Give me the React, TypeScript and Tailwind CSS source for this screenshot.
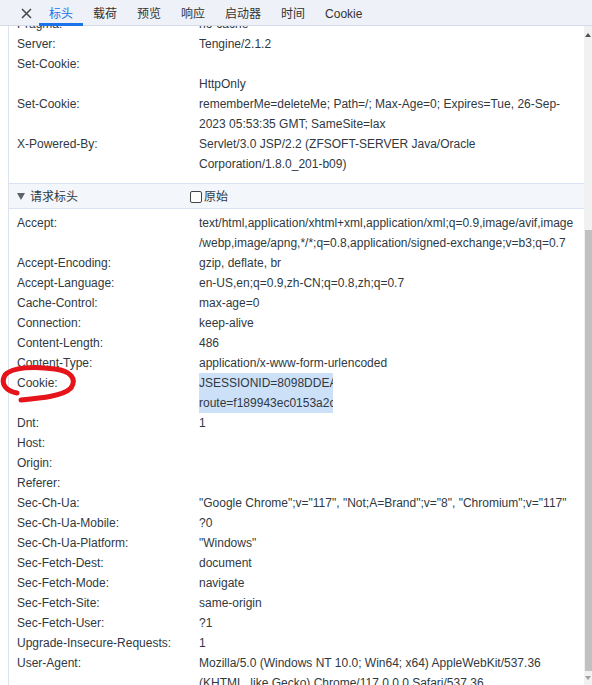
import React from 'react';

type Row = { name: string; value: string[]; selected?: boolean };

const responseRows: Row[] = [
  { name: 'Pragma:', value: ['no-cache'] },
  { name: 'Server:', value: ['Tengine/2.1.2'] },
  { name: 'Set-Cookie:', value: ['', 'HttpOnly'] },
  {
    name: 'Set-Cookie:',
    value: ['rememberMe=deleteMe; Path=/; Max-Age=0; Expires=Tue, 26-Sep-', '2023 05:53:35 GMT; SameSite=lax'],
  },
  { name: 'X-Powered-By:', value: ['Servlet/3.0 JSP/2.2 (ZFSOFT-SERVER Java/Oracle', 'Corporation/1.8.0_201-b09)'] },
];

const requestRows: Row[] = [
  {
    name: 'Accept:',
    value: [
      'text/html,application/xhtml+xml,application/xml;q=0.9,image/avif,image',
      '/webp,image/apng,*/*;q=0.8,application/signed-exchange;v=b3;q=0.7',
    ],
  },
  { name: 'Accept-Encoding:', value: ['gzip, deflate, br'] },
  { name: 'Accept-Language:', value: ['en-US,en;q=0.9,zh-CN;q=0.8,zh;q=0.7'] },
  { name: 'Cache-Control:', value: ['max-age=0'] },
  { name: 'Connection:', value: ['keep-alive'] },
  { name: 'Content-Length:', value: ['486'] },
  { name: 'Content-Type:', value: ['application/x-www-form-urlencoded'] },
  { name: 'Cookie:', value: ['JSESSIONID=8098DDEA07C1', 'route=f189943ec0153a2c7'], selected: true },
  { name: 'Dnt:', value: ['1'] },
  { name: 'Host:', value: [''] },
  { name: 'Origin:', value: [''] },
  { name: 'Referer:', value: [''] },
  { name: 'Sec-Ch-Ua:', value: ['"Google Chrome";v="117", "Not;A=Brand";v="8", "Chromium";v="117"'] },
  { name: 'Sec-Ch-Ua-Mobile:', value: ['?0'] },
  { name: 'Sec-Ch-Ua-Platform:', value: ['"Windows"'] },
  { name: 'Sec-Fetch-Dest:', value: ['document'] },
  { name: 'Sec-Fetch-Mode:', value: ['navigate'] },
  { name: 'Sec-Fetch-Site:', value: ['same-origin'] },
  { name: 'Sec-Fetch-User:', value: ['?1'] },
  { name: 'Upgrade-Insecure-Requests:', value: ['1'] },
  {
    name: 'User-Agent:',
    value: ['Mozilla/5.0 (Windows NT 10.0; Win64; x64) AppleWebKit/537.36', '(KHTML, like Gecko) Chrome/117.0.0.0 Safari/537.36'],
  },
];

const tabs = ['标头', '载荷', '预览', '响应', '启动器', '时间', 'Cookie'];

function HeaderRow({ row }: { row: Row }) {
  return (
    <div className="flex pl-[8px]">
      <div className="w-[182px] shrink-0 h-[20px] leading-[20px] whitespace-nowrap">{row.name}</div>
      <div className="flex-1 min-w-0">
        {row.value.map((line, i) =>
          row.selected ? (
            <div key={i} className="h-[20px] leading-[20px]">
              <span className="inline-block w-[134px] overflow-hidden whitespace-nowrap bg-[#cce0f8] align-top">
                {line}
              </span>
            </div>
          ) : (
            <div key={i} className="h-[20px] leading-[20px] whitespace-nowrap overflow-hidden">
              {line}
            </div>
          ),
        )}
      </div>
    </div>
  );
}

export default function App() {
  return (
    <div
      className="relative w-[592px] h-[685px] overflow-hidden bg-white text-[12px] text-[#303942] flex flex-col"
      style={{ fontFamily: '"Liberation Sans", "Noto Sans CJK SC", sans-serif' }}
    >
      {/* tab strip */}
      <div className="h-[26px] shrink-0 flex items-stretch bg-[#eef1f8] border-b border-[#d5dce8]">
        <button className="ml-[13px] w-[26px] flex items-center justify-center pt-[1px]">
          <svg width="11" height="11" viewBox="0 0 11 11">
            <path d="M1 1 L10 10 M10 1 L1 10" stroke="#474747" strokeWidth="1.5" />
          </svg>
        </button>
        {tabs.map((t, i) => (
          <div
            key={t}
            className={
              i === 0
                ? 'px-[10px] flex items-center text-[#1a73e8] border-b-[3px] border-[#1a73e8] -mb-px pt-[4px]'
                : 'px-[10px] flex items-center text-[#333] pt-[2px]'
            }
          >
            {t}
          </div>
        ))}
      </div>

      <div className="flex flex-1 min-h-0">
        <div className="flex-1 min-w-0 ml-[8px] border-l border-[#dde3ec] overflow-hidden">
          <div className="-mt-[12px]">
            <div className="pb-[9px]">
              {responseRows.map((r, i) => (
                <HeaderRow key={i} row={r} />
              ))}
            </div>

            <div className="h-[26px] flex items-center bg-[#f3f6fb] border-y border-[#d8e3f3] pl-[8px] pt-[1px]">
              <div className="w-[173px] flex items-center gap-[5px]">
                <svg width="8" height="7" viewBox="0 0 8 7">
                  <path d="M0 0 H8 L4 7 Z" fill="#5f6368" />
                </svg>
                <span>请求标头</span>
              </div>
              <label className="flex items-center gap-[2px]">
                <span className="inline-block w-[12px] h-[12px] border border-[#444] rounded-[2px] bg-white" />
                <span>原始</span>
              </label>
            </div>

            <div className="pt-[4px]">
              {requestRows.map((r, i) => (
                <HeaderRow key={i} row={r} />
              ))}
            </div>
          </div>
        </div>

        {/* scrollbar */}
        <div className="w-[8px] shrink-0 bg-[#f1f1f1] flex flex-col items-center">
          <div className="h-[18px] flex items-center justify-center">
            <span className="block w-0 h-0 border-x-[3px] border-x-transparent border-b-[4px] border-b-[#505050]" />
          </div>
          <div className="h-[186px]" />
          <div className="w-[7px] flex-1 bg-[#c1c1c1]" />
          <div className="h-[14px] flex items-center justify-center">
            <span className="block w-0 h-0 border-x-[3px] border-x-transparent border-t-[4px] border-t-[#a0a0a0]" />
          </div>
        </div>
      </div>

      {/* red annotation around Cookie label */}
      <svg className="absolute left-0 top-0 pointer-events-none" width="100" height="420" viewBox="0 0 100 420">
        <path
          d="M 21 400 C 42 398, 63 396, 71 388 C 77 379, 71 371, 55 369 C 35 366, 12 367, 5 375 C 0 384, 6 391, 17 393"
          fill="none"
          stroke="#e5141b"
          strokeWidth="5"
          strokeLinecap="round"
        />
      </svg>
    </div>
  );
}
